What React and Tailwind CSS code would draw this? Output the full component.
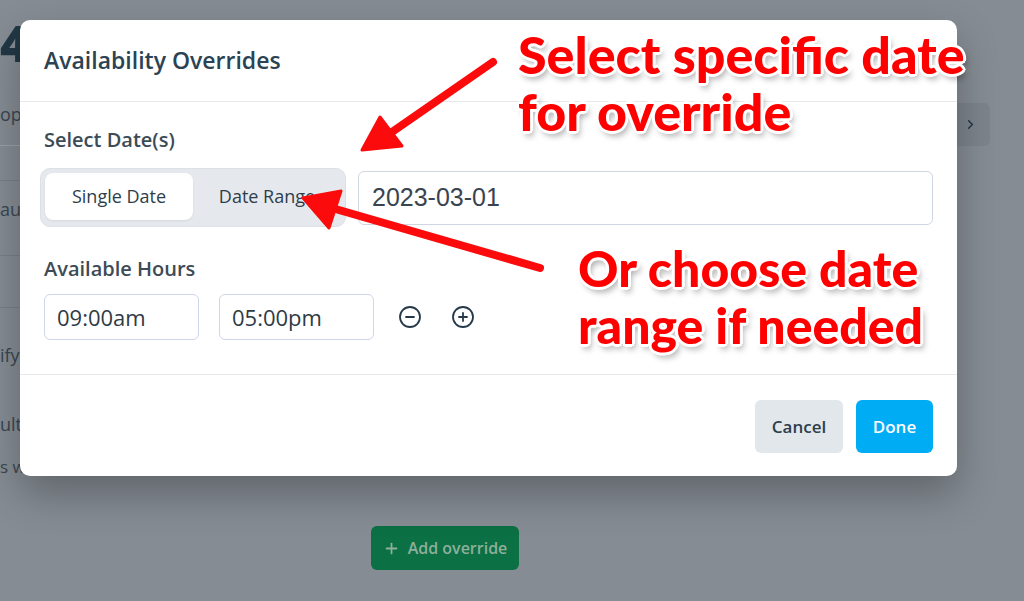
import { ChevronRight, CircleMinus, CirclePlus, Plus } from 'lucide-react';

const callout =
  "font-['Lato',sans-serif] text-[#ff0000] font-black leading-[57px] [text-shadow:-2px_-2px_0_#fff,2px_-2px_0_#fff,-2px_2px_0_#fff,2px_2px_0_#fff,0_-3px_0_#fff,0_3px_0_#fff,-3px_0_0_#fff,3px_0_0_#fff,3px_5px_6px_rgba(0,0,0,0.35)]";

function BackgroundPage() {
  return (
    <div className="flex flex-col">
      <div className="flex justify-between">
        <div className="w-[300px] flex flex-col text-[#3a4650]">
          <div className="pt-[20px] text-[50px] font-extrabold leading-[46px] text-[#223845]">4</div>
          <div className="mt-[36px] text-[18px] leading-6">op</div>
          <div className="mt-[19px] h-px bg-[#9ba1a7]" />
          <div className="mt-[34px] h-px bg-[#787f87]" />
          <div className="mt-[16px] text-[18px] leading-6">aut</div>
          <div className="mt-[34px] h-px bg-[#787f87]" />
          <div className="mt-[51px] h-px bg-[#787f87]" />
          <div className="mt-[35px] text-[18px] leading-6">ify</div>
          <div className="mt-[45px] text-[18px] leading-6">ult</div>
          <div className="mt-[19px] text-[17px] leading-6">s w</div>
        </div>
        <div className="mt-[103px] mr-[34px] w-[40px] h-[43px] rounded-md bg-[#7c848c] flex items-center justify-end pr-[12px] text-[#25374a]">
          <ChevronRight size={15} strokeWidth={2.5} />
        </div>
      </div>
      <div className="mt-[47px] ml-[371px] w-[148px] h-[44px] rounded-md bg-[#0b7043] flex items-center justify-center gap-2 text-[16px] font-semibold text-[#8daf9b]">
        <Plus size={17} strokeWidth={2.5} />
        Add override
      </div>
    </div>
  );
}

function OverrideModal() {
  return (
    <div className="w-[937px] h-[456px] bg-white rounded-[10px] shadow-[0_18px_40px_rgba(0,0,0,0.28)] flex flex-col">
      <div className="h-[82px] px-6 flex items-center border-b border-[#e6e8eb]">
        <h2 className="text-[23px] font-semibold text-[#2b4352]">Availability Overrides</h2>
      </div>

      <div className="px-6 pt-[26px] pb-[34px] border-b border-[#e6e8eb]">
        <div className="text-[20px] font-semibold leading-6 text-[#3d4b56]">Select Date(s)</div>
        <div className="mt-4 flex items-center gap-3">
          <div className="-ml-1 w-[306px] h-[59px] p-[4px] rounded-[10px] bg-[#e5e9ed] border border-[#dce1e6] flex items-start">
            <div className="w-[148px] h-[47px] rounded-lg bg-white shadow-[0_1px_2px_rgba(0,0,0,0.08)] flex items-center justify-center text-[18px] text-[#2d3e4b]">
              Single Date
            </div>
            <div className="flex-1 h-[47px] flex items-center justify-center text-[18px] text-[#2d3e4b]">
              Date Range
            </div>
          </div>
          <div className="flex-1 h-[54px] rounded-md border border-[#cfd6e2] px-[13px] flex items-center font-['Liberation_Sans',Arial,sans-serif] text-[25px] text-[#3a4450]">
            2023-03-01
          </div>
        </div>

        <div className="mt-[30px] text-[20px] font-semibold leading-6 text-[#3d4b56]">Available Hours</div>
        <div className="mt-[13px] flex items-center">
          <div className="w-[155px] h-[46px] rounded-md border border-[#cdd6ea] px-[12px] flex items-center text-[22px] text-[#2f3b45]">
            09:00am
          </div>
          <div className="ml-5 w-[155px] h-[46px] rounded-md border border-[#cdd6ea] px-[12px] flex items-center text-[22px] text-[#2f3b45]">
            05:00pm
          </div>
          <CircleMinus className="ml-[24px] text-[#26394a]" size={24} strokeWidth={1.8} />
          <CirclePlus className="ml-[29px] text-[#26394a]" size={24} strokeWidth={1.8} />
        </div>
      </div>

      <div className="flex-1 px-6 pt-[25px] flex justify-end items-start gap-[13px]">
        <button className="w-[88px] h-[53px] rounded-md bg-[#e2e7ec] text-[17px] font-semibold text-[#2d3e4b]">
          Cancel
        </button>
        <button className="w-[77px] h-[53px] rounded-md bg-[#00adf5] text-[17px] font-semibold text-white">
          Done
        </button>
      </div>
    </div>
  );
}

function Annotations() {
  return (
    <div className="absolute inset-0 pointer-events-none">
      <svg className="absolute inset-0" width="1024" height="601" viewBox="0 0 1024 601">
        <g fill="#fb0b0b" stroke="#fb0b0b" strokeLinecap="round" strokeLinejoin="round">
          <line x1="493" y1="62" x2="392" y2="132" strokeWidth="8" fill="none" />
          <polygon points="362,150 380,117 402,146" strokeWidth="3" />
          <line x1="540" y1="268" x2="332" y2="208" strokeWidth="8" fill="none" />
          <polygon points="303,198 341,191 329,228" strokeWidth="3" />
        </g>
      </svg>
      <div className={`absolute left-[518px] top-[26px] text-[52px] ${callout}`}>
        <div>Select specific date</div>
        <div>for override</div>
      </div>
      <div className={`absolute left-[578px] top-[240px] text-[50px] ${callout}`}>
        <div>Or choose date</div>
        <div>range if needed</div>
      </div>
    </div>
  );
}

export default function App() {
  return (
    <div className="relative w-[1024px] h-[601px] overflow-hidden bg-[#858c93] font-['Open_Sans','Noto_Sans',sans-serif]">
      <BackgroundPage />
      <div className="absolute inset-0 pl-5 pt-5">
        <OverrideModal />
      </div>
      <Annotations />
    </div>
  );
}
